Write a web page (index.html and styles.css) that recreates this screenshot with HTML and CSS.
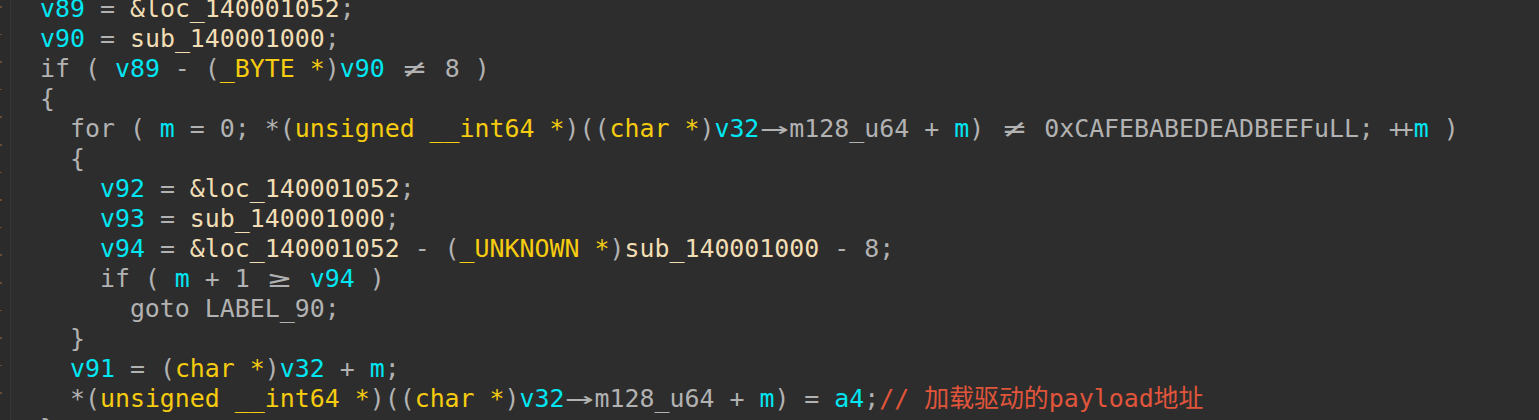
FILE: index.html
```html
<!DOCTYPE html>
<html lang="zh">
<head>
<meta charset="utf-8">
<title>Pseudocode</title>
<link rel="stylesheet" href="styles.css">
</head>
<body>
<div class="editor">
  <div class="gutter">
    <i></i><i></i><i></i><i></i><i></i><i></i><i></i><i></i><i></i><i></i><i></i><i></i><i></i><i></i><i></i>
  </div>
  <pre class="code"><span class="line">  <span class="v">v89</span> = <span class="n">&amp;loc_140001052</span>;</span>
<span class="line">  <span class="v">v90</span> = <span class="n">sub_140001000</span>;</span>
<span class="line">  if ( <span class="v">v89</span> - (<span class="t">_BYTE *</span>)<span class="v">v90</span> <span class="lig"><span class="g">≠</span></span> 8 )</span>
<span class="line">  {</span>
<span class="line">    for ( <span class="v">m</span> = 0; *(<span class="t">unsigned __int64 *</span>)((<span class="t">char *</span>)<span class="v">v32</span><span class="lig"><span class="g arrow">→</span></span>m128_u64 + <span class="v">m</span>) <span class="lig"><span class="g">≠</span></span> 0xCAFEBABEDEADBEEFuLL; <span class="pp">++</span><span class="v">m</span> )</span>
<span class="line">    {</span>
<span class="line">      <span class="v">v92</span> = <span class="n">&amp;loc_140001052</span>;</span>
<span class="line">      <span class="v">v93</span> = <span class="n">sub_140001000</span>;</span>
<span class="line">      <span class="v">v94</span> = <span class="n">&amp;loc_140001052</span> - (<span class="t">_UNKNOWN *</span>)<span class="n">sub_140001000</span> - 8;</span>
<span class="line">      if ( <span class="v">m</span> + 1 <span class="lig"><span class="g">≥</span></span> <span class="v">v94</span> )</span>
<span class="line">        goto LABEL_90;</span>
<span class="line">    }</span>
<span class="line">    <span class="v">v91</span> = (<span class="t">char *</span>)<span class="v">v32</span> + <span class="v">m</span>;</span>
<span class="line">    *(<span class="t">unsigned __int64 *</span>)((<span class="t">char *</span>)<span class="v">v32</span><span class="lig"><span class="g arrow">→</span></span>m128_u64 + <span class="v">m</span>) = <span class="v">a4</span>;<span class="c">// 加载驱动的payload地址</span></span>
<span class="line">  }</span></pre>
</div>
</body>
</html>
```

FILE: styles.css
```css
html, body {
  margin: 0;
  padding: 0;
  background: #2d2d2d;
  overflow: hidden;
}

.editor {
  display: flex;
  height: 420px;
  overflow: hidden;
  background: #2d2d2d;
}

.gutter {
  width: 11px;
  flex: none;
  display: flex;
  flex-direction: column;
  padding-top: 6px;
  border-right: 1px solid #353535;
  box-sizing: border-box;
  background: #2b2b2b;
}

.gutter i {
  display: block;
  width: 2px;
  height: 4px;
  margin-bottom: 26px;
  background: #6a4a32;
}

.code {
  margin: -6px 0 0 -1px;
  padding: 0;
  font-family: "DejaVu Sans Mono", "Liberation Mono", monospace;
  font-size: 24.9px;
  line-height: 30px;
  color: #b2b2b2;
  white-space: pre;
}

.line {
  display: inline;
}

.v { color: #00e6f2; }
.t { color: #f6cc10; }
.n { color: #f2deb4; }
.c {
  color: #e0553b;
  font-family: "DejaVu Sans Mono", "Noto Sans CJK SC", monospace;
}

.lig {
  display: inline-block;
  width: 30px;
  text-align: center;
  vertical-align: top;
}

.g {
  display: inline-block;
  transform: scaleX(1.5);
}

.g.arrow {
  transform: scaleX(1.9);
}

.pp {
  letter-spacing: -5px;
  margin-right: 5px;
}
```
